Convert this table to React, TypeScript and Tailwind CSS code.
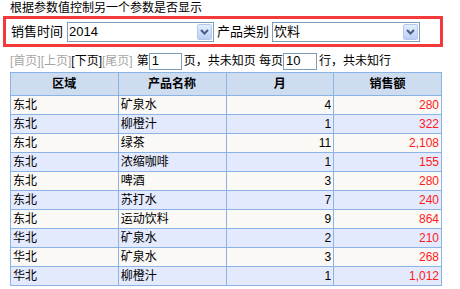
const rows = [
  { area: "东北", name: "矿泉水", month: "4", sales: "280" },
  { area: "东北", name: "柳橙汁", month: "1", sales: "322" },
  { area: "东北", name: "绿茶", month: "11", sales: "2,108" },
  { area: "东北", name: "浓缩咖啡", month: "1", sales: "155" },
  { area: "东北", name: "啤酒", month: "3", sales: "280" },
  { area: "东北", name: "苏打水", month: "7", sales: "240" },
  { area: "东北", name: "运动饮料", month: "9", sales: "864" },
  { area: "华北", name: "矿泉水", month: "2", sales: "210" },
  { area: "华北", name: "矿泉水", month: "3", sales: "268" },
  { area: "华北", name: "柳橙汁", month: "1", sales: "1,012" },
];

function ComboBox({ value, width }: { value: string; width: string }) {
  return (
    <div className={`flex h-[20px] items-center border border-[#7f9db9] bg-white pl-[1px] pr-[1px] ${width}`}>
      <span className="flex-1 text-[13px] leading-[16px] text-black">{value}</span>
      <span className="flex h-[16px] w-[15px] items-center justify-center rounded-[2px] border border-[#b4c8ee] bg-gradient-to-b from-[#e4eefd] to-[#b9cff5]">
        <svg width="9" height="6" viewBox="0 0 9 6">
          <path d="M1 1 L4.5 4.5 L8 1" fill="none" stroke="#4a5d82" strokeWidth="2" />
        </svg>
      </span>
    </div>
  );
}

export default function App() {
  return (
    <div className="h-[289px] w-[460px] bg-white font-['Liberation_Sans','Noto_Sans_CJK_SC',sans-serif] text-black">
      <div className="h-[16px] pl-[10px] pt-[1px] text-[12px] leading-[14px]">根据参数值控制另一个参数是否显示</div>

      <div className="ml-[3px] flex h-[31px] w-[440px] items-center border-[3px] border-[#f23a3a] pl-[5px]">
        <span className="text-[13px] leading-[16px]">销售时间</span>
        <div className="ml-[4px]">
          <ComboBox value="2014" width="w-[147px]" />
        </div>
        <span className="ml-[3px] text-[13px] leading-[16px]">产品类别</span>
        <div className="ml-[3px]">
          <ComboBox value="饮料" width="w-[148px]" />
        </div>
      </div>

      <div className="mt-[4px] flex h-[20px] items-center pl-[10px] text-[12px] leading-[14px]">
        <span className="text-[#a6a6a6]">[首页][上页]</span>
        <span>[下页]</span>
        <span className="text-[#a6a6a6]">[尾页]</span>
        <span className="ml-[4px]">第</span>
        <span className="flex h-[17px] w-[33px] items-center border border-[#7f9db9] pl-[2px] text-[13px]">1</span>
        <span className="ml-[2px]">页，共未知页 每页</span>
        <span className="flex h-[17px] w-[34px] items-center border border-[#7f9db9] pl-[2px] text-[13px]">10</span>
        <span className="ml-[2px]">行，共未知行</span>
      </div>

      <table className="ml-[10px] mt-[1px] w-[432px] table-fixed border-collapse text-[12px] leading-[14px]">
        <thead>
          <tr className="bg-[#cedcf0]">
            {["区域", "产品名称", "月", "销售额"].map((h) => (
              <th key={h} className="h-[23px] border border-[#8cb3e5] p-0 text-center font-bold">
                {h}
              </th>
            ))}
          </tr>
        </thead>
        <tbody>
          {rows.map((r, i) => (
            <tr key={i} className={i % 2 === 0 ? "bg-[#faf9f5]" : "bg-[#e4eafd]"}>
              <td className="h-[19px] border border-[#8cb3e5] px-[2px] py-0 text-left">{r.area}</td>
              <td className="h-[19px] border border-[#8cb3e5] px-[2px] py-0 text-left">{r.name}</td>
              <td className="h-[19px] border border-[#8cb3e5] px-[2px] py-0 text-right">{r.month}</td>
              <td className="h-[19px] border border-[#8cb3e5] px-[2px] py-0 text-right text-[#ff1a1a]">{r.sales}</td>
            </tr>
          ))}
        </tbody>
      </table>
    </div>
  );
}
